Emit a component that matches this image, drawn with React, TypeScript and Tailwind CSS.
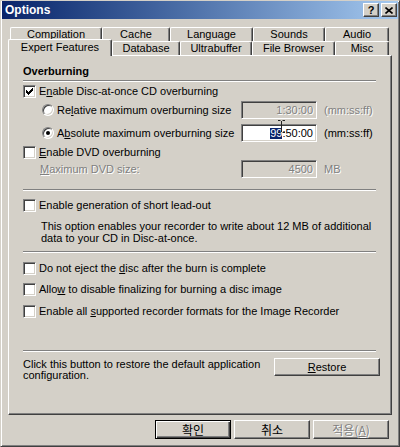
import type { ReactNode } from "react";

const raised =
  "border border-t-white border-l-white border-r-[#404040] border-b-[#404040] shadow-[inset_-1px_-1px_0_#808080]";
const sunken =
  "border border-t-[#808080] border-l-[#808080] border-r-white border-b-white shadow-[inset_1px_1px_0_#404040,inset_-1px_-1px_0_#d4d0c8]";
const dim = "text-[#808080] [text-shadow:1px_1px_0_#fff]";

const row1 = [
  { label: "Compilation", w: "w-[92px]" },
  { label: "Cache", w: "w-[68px]" },
  { label: "Language", w: "w-[83px]" },
  { label: "Sounds", w: "w-[72px]" },
  { label: "Audio", w: "w-[64px]" },
];

const row2 = [
  { label: "Database", w: "w-[68px]" },
  { label: "Ultrabuffer", w: "w-[72px]" },
  { label: "File Browser", w: "w-[83px]" },
  { label: "Misc", w: "w-[54px]" },
];

// windows style 7x7 check mark, one 3px column per x
const checkCols = [2, 3, 4, 3, 2, 1, 0];

function Check({ checked }: { checked?: boolean }) {
  return (
    <div className={`relative h-[13px] w-[13px] shrink-0 bg-white ${sunken}`}>
      {checked && (
        <svg className="absolute left-[2px] top-[2px]" width="7" height="7" viewBox="0 0 7 7">
          {checkCols.map((y, x) => (
            <rect key={x} x={x} y={y} width="1" height="3" fill="#000" />
          ))}
        </svg>
      )}
    </div>
  );
}

function Radio({ checked }: { checked?: boolean }) {
  return (
    <div className={`relative h-[12px] w-[12px] shrink-0 rounded-full bg-white ${sunken}`}>
      {checked && <div className="absolute left-[3px] top-[3px] h-[4px] w-[4px] rounded-full bg-black" />}
    </div>
  );
}

function CheckRow({ checked, children, className = "" }: { checked?: boolean; children: ReactNode; className?: string }) {
  return (
    <div className={`flex h-[16px] items-center gap-[3px] whitespace-nowrap ${className}`}>
      <Check checked={checked} />
      <span>{children}</span>
    </div>
  );
}

function Sep({ className = "" }: { className?: string }) {
  return <div className={`h-[2px] border-t border-b border-t-[#808080] border-b-white ${className}`} />;
}

function Field({ disabled, children }: { disabled?: boolean; children: ReactNode }) {
  return (
    <div
      className={`relative flex h-[18px] w-[76px] shrink-0 items-center justify-end pr-[3px] ${sunken} ${
        disabled ? `bg-[#d4d0c8] ${dim}` : "bg-white"
      }`}
    >
      {children}
    </div>
  );
}

function Button({ children, def, disabled, className = "" }: { children: ReactNode; def?: boolean; disabled?: boolean; className?: string }) {
  return (
    <div
      className={`flex items-center justify-center bg-[#d4d0c8] ${
        def
          ? "border border-black shadow-[inset_1px_1px_0_#fff,inset_-1px_-1px_0_#404040,inset_-2px_-2px_0_#808080]"
          : raised
      } ${disabled ? dim : ""} ${className}`}
    >
      {children}
    </div>
  );
}

export default function App() {
  return (
    <div className="h-[447px] w-[400px] overflow-hidden border border-t-[#d4d0c8] border-l-[#d4d0c8] border-r-[#404040] border-b-[#404040] bg-[#d4d0c8] px-[1px] font-['Liberation_Sans',Arial,sans-serif] text-[11px] leading-none text-black shadow-[inset_1px_1px_0_#fff,inset_-1px_-1px_0_#808080]">
      {/* Title bar */}
      <div className="flex h-[18px] items-center bg-linear-to-r from-[#0a246a] to-[#a6caf0] pl-[3px] pr-[1px]">
        <span className="flex-1 text-[12px] font-bold text-white">Options</span>
        <div className={`flex h-[14px] w-[16px] items-center justify-center bg-[#d4d0c8] text-[11px] font-bold ${raised}`}>?</div>
        <div className={`ml-[2px] flex h-[14px] w-[16px] items-center justify-center bg-[#d4d0c8] ${raised}`}>
          <svg width="8" height="7" viewBox="0 0 8 7">
            <path d="M0.5 0.5l7 6M7.5 0.5l-7 6" stroke="#000" strokeWidth="1.6" />
          </svg>
        </div>
      </div>

      {/* Tabs */}
      <div className="ml-[8px] mt-[8px] flex h-[12px]">
        {row1.map((t) => (
          <div
            key={t.label}
            className={`flex h-[14px] shrink-0 items-center justify-center rounded-t-[2px] bg-[#d4d0c8] border-l border-t border-r border-l-white border-t-white border-r-[#404040] shadow-[inset_-1px_0_0_#808080] ${t.w}`}
          >
            {t.label}
          </div>
        ))}
      </div>
      <div className="ml-[6px] flex h-[16px] items-start">
        <div className="relative z-10 flex h-[17px] w-[104px] shrink-0 items-center justify-center rounded-t-[2px] bg-[#d4d0c8] border-l border-t border-r border-l-white border-t-white border-r-[#404040] pb-[1px] shadow-[inset_-1px_0_0_#808080]">
          Expert Features
        </div>
        {row2.map((t) => (
          <div
            key={t.label}
            className={`mt-[2px] flex h-[14px] shrink-0 items-center justify-center rounded-t-[2px] bg-[#d4d0c8] border-l border-t border-r border-l-white border-t-white border-r-[#404040] shadow-[inset_-1px_0_0_#808080] ${t.w}`}
          >
            {t.label}
          </div>
        ))}
      </div>

      {/* Panel */}
      <div className={`ml-[6px] h-[360px] w-[384px] pl-[14px] pr-[15px] pt-[7px] ${raised}`}>
        <div className="flex h-[16px] items-center font-bold">Overburning</div>
        <Sep className="mt-[1px]" />
        <CheckRow checked className="mt-[1px]">
          E<u>n</u>able Disc-at-once CD overburning
        </CheckRow>

        <div className="mt-[2px] flex h-[18px] items-center">
          <div className="flex w-[218px] items-center gap-[3px] overflow-hidden whitespace-nowrap pl-[19px]">
            <Radio />
            <span>
              Re<u>l</u>ative maximum overburning size
            </span>
          </div>
          <Field disabled>1:30:00</Field>
          <span className={`ml-[7px] ${dim}`}>(mm:ss:ff)</span>
        </div>

        <div className="mt-[5px] flex h-[18px] items-center">
          <div className="flex w-[218px] items-center gap-[3px] overflow-hidden whitespace-nowrap pl-[19px]">
            <Radio checked />
            <span>
              A<u>b</u>solute maximum overburning size
            </span>
          </div>
          <Field>
            <span className="bg-[#0a246a] text-white">99</span>:50:00
            <svg className="absolute left-[36px] top-[-5px]" width="7" height="13" viewBox="0 0 7 13">
              <path d="M0 0.5h2.5M4.5 0.5H7M3.5 1v11M0 12.5h2.5M4.5 12.5H7" stroke="#222" strokeWidth="1" />
            </svg>
          </Field>
          <span className="ml-[7px]">(mm:ss:ff)</span>
        </div>

        <CheckRow className="mt-[2px]">
          <u>E</u>nable DVD overburning
        </CheckRow>

        <div className="flex h-[18px] items-center">
          <div className={`w-[218px] whitespace-nowrap pl-[17px] ${dim}`}>
            <u>M</u>aximum DVD size:
          </div>
          <Field disabled>4500</Field>
          <span className={`ml-[7px] ${dim}`}>MB</span>
        </div>

        <Sep className="mt-[11px]" />
        <CheckRow className="mt-[6px]">
          Enable <u>g</u>eneration of short lead-out
        </CheckRow>
        <p className="mt-[7px] pl-[18px] leading-[12px]">
          This option enables your recorder to write about 12 MB of additional
          <br />
          data to your CD in Disc-at-once.
        </p>

        <Sep className="mt-[7px]" />
        <CheckRow className="mt-[7px]">
          Do not eject the <u>d</u>isc after the burn is complete
        </CheckRow>
        <CheckRow className="mt-[5px]">
          Allo<u>w</u> to disable finalizing for burning a disc image
        </CheckRow>
        <CheckRow className="mt-[6px]">
          Enable all <u>s</u>upported recorder formats for the Image Recorder
        </CheckRow>

        <Sep className="mt-[31px]" />
        <div className="mt-[6px] flex items-start justify-between">
          <p className="pt-[1px] leading-[11px]">
            Click this button to restore the default application
            <br />
            configuration.
          </p>
          <Button className="-mr-[4px] h-[18px] w-[106px]">
            <span>
              <u>R</u>estore
            </span>
          </Button>
        </div>
      </div>

      {/* Dialog buttons */}
      <div className="mt-[5px] flex justify-end gap-[3px] pr-[9px] font-['Noto_Sans_CJK_KR','Liberation_Sans',sans-serif] text-[12px]">
        <Button def className="h-[19px] w-[76px]">확인</Button>
        <Button className="h-[19px] w-[76px]">취소</Button>
        <Button disabled className="h-[19px] w-[76px]">
          <span>
            적용(<u>A</u>)
          </span>
        </Button>
      </div>
    </div>
  );
}
